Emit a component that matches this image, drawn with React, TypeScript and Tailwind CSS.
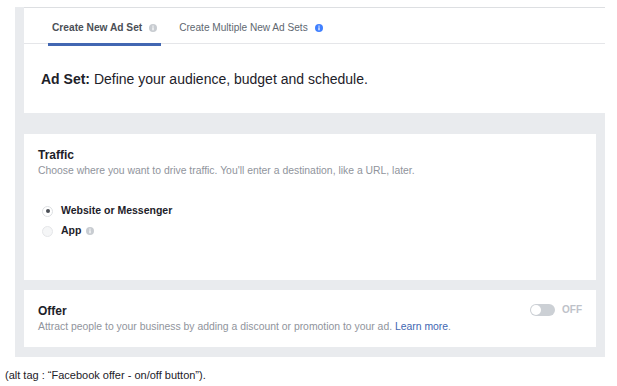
import React from "react";

function InfoIcon({ blue = false }: { blue?: boolean }) {
  return (
    <svg width="8" height="8" viewBox="0 0 8 8" className="shrink-0">
      <circle cx="4" cy="4" r="4" fill={blue ? "#4080ff" : "#c8ccd1"} />
      <rect x="3.4" y="3.3" width="1.2" height="3" fill="#ffffff" />
      <rect x="3.4" y="1.6" width="1.2" height="1.1" fill="#ffffff" />
    </svg>
  );
}

export default function App() {
  return (
    <div className="w-[617px] h-[386px] bg-white font-['Liberation_Sans',Arial,sans-serif] overflow-hidden">
      <div className="pt-[7px] pl-[15px] w-[605px]">
        <div className="bg-[#e9ebee] pl-[9px] pb-[10px]">
          {/* Top card */}
          <div className="bg-white border-t border-[#dddfe2]">
            <div className="h-[36px] border-b border-[#e5e6e9] flex items-stretch pl-[24px] gap-[14px]">
              <div className="relative flex items-center gap-[7px] px-[4px] pt-[4px]">
                <span className="text-[10.2px] font-bold text-[#4b4f56] leading-[12px]">Create New Ad Set</span>
                <InfoIcon />
                <div className="absolute left-0 right-0 -bottom-[3px] h-[3px] bg-[#4267b2]" />
              </div>
              <div className="flex items-center gap-[7px] px-[4px] pt-[4px]">
                <span className="text-[10.1px] text-[#606770] leading-[12px]">Create Multiple New Ad Sets</span>
                <InfoIcon blue />
              </div>
            </div>
            <div className="h-[69px] pt-[27px] pl-[17px]">
              <p className="text-[14px] leading-[17px] text-[#1d2129]">
                <span className="font-bold">Ad Set:</span> Define your audience, budget and schedule.
              </p>
            </div>
          </div>

          {/* Traffic card */}
          <div className="mt-[21px] mr-[9px] bg-white h-[146px] pt-[14px] pl-[14px]">
            <h3 className="text-[12px] leading-[15px] font-bold text-[#1d2129]">Traffic</h3>
            <p className="text-[10.4px] leading-[14px] text-[#90949c] mt-[1px]">
              Choose where you want to drive traffic. You'll enter a destination, like a URL, later.
            </p>
            <div className="mt-[25px] flex flex-col gap-[4px]">
              <div className="flex items-center h-[16px]">
                <div className="w-[11px] h-[11px] rounded-full border border-[#dddfe2] bg-white flex items-center justify-center ml-[4px]">
                  <div className="w-[4px] h-[4px] rounded-full bg-[#4b4f56]" />
                </div>
                <span className="ml-[8px] text-[10.5px] font-bold text-[#1d2129]">Website or Messenger</span>
              </div>
              <div className="flex items-center h-[16px]">
                <div className="w-[11px] h-[11px] rounded-full border border-[#e5e6e9] bg-[#f5f6f7] ml-[4px]" />
                <span className="ml-[8px] text-[10.5px] font-bold text-[#1d2129]">App</span>
                <span className="ml-[5px] flex"><InfoIcon /></span>
              </div>
            </div>
          </div>

          {/* Offer card */}
          <div className="mt-[10px] mr-[9px] bg-white h-[57px] pt-[14px] pl-[14px] pr-[14px] flex justify-between">
            <div>
              <h3 className="text-[12px] leading-[15px] font-bold text-[#1d2129]">Offer</h3>
              <p className="text-[10.4px] leading-[14px] text-[#90949c] mt-[1px]">
                Attract people to your business by adding a discount or promotion to your ad.{" "}
                <span className="text-[#4267b2]">Learn more</span>.
              </p>
            </div>
            <div className="flex items-center gap-[7px] h-[12px]">
              <div className="w-[25px] h-[12px] rounded-full bg-[#ccd0d5] p-[1px] flex items-center">
                <div className="w-[10px] h-[10px] rounded-full bg-white" />
              </div>
              <span className="text-[10px] font-bold text-[#bec2c9] leading-[12px]">OFF</span>
            </div>
          </div>
        </div>
      </div>
      <p className="mt-[12px] pl-[5px] text-[11px] leading-[13px] text-[#1d2129]">
        (alt tag : “Facebook offer - on/off button”).
      </p>
    </div>
  );
}
